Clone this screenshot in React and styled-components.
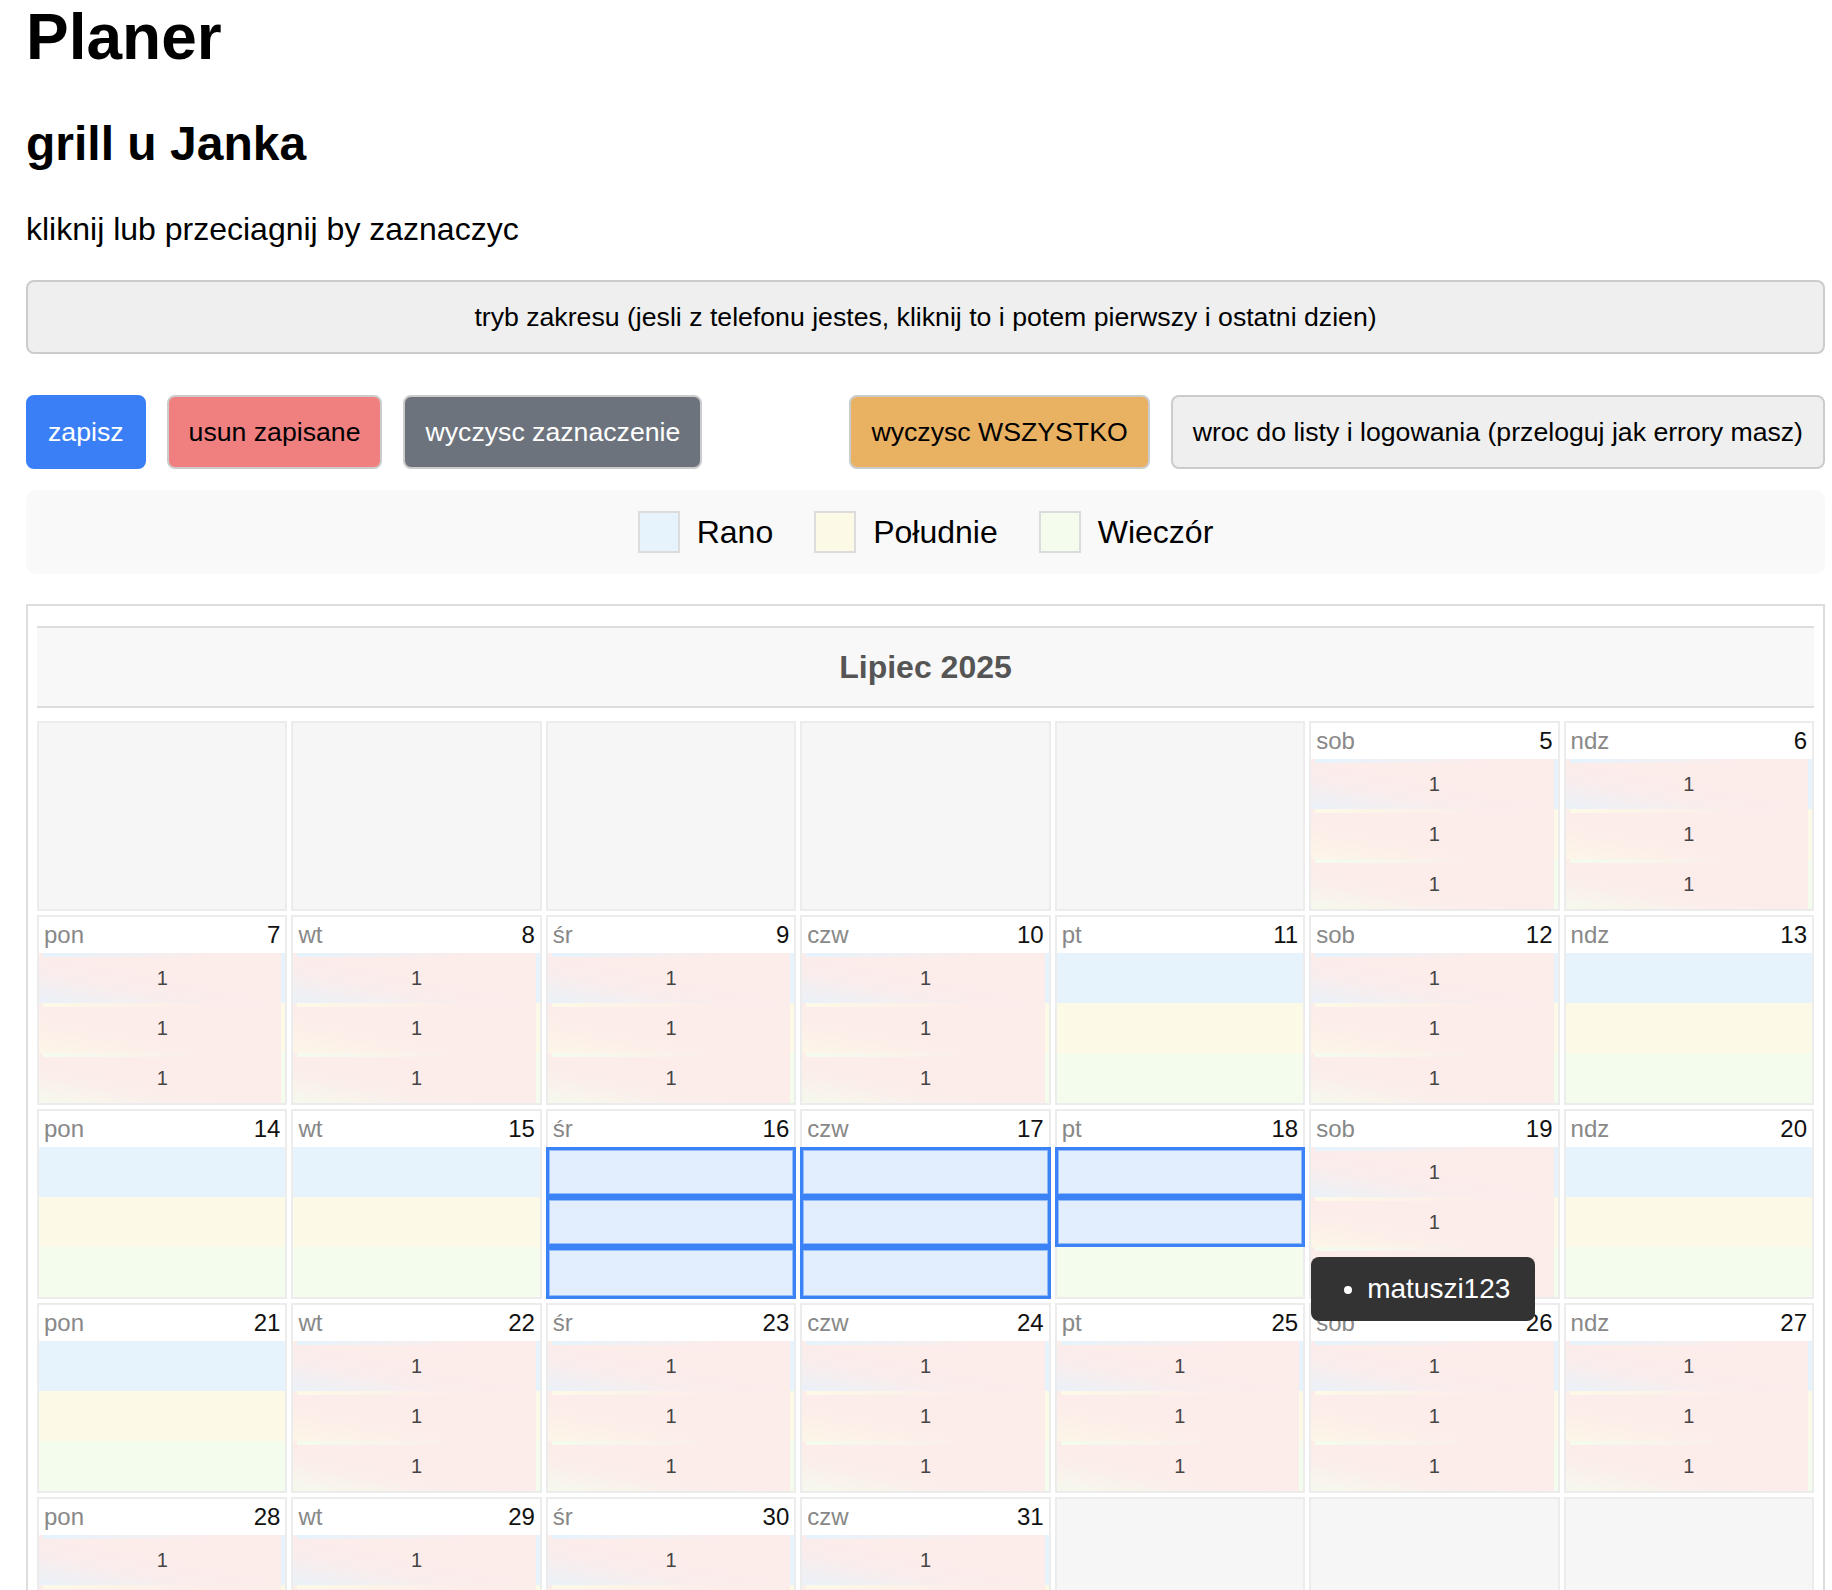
import React from "react";
import styled, { createGlobalStyle, css } from "styled-components";

const GlobalStyle = createGlobalStyle`
  *, *::before, *::after {
    box-sizing: border-box;
  }
  html, body {
    margin: 0;
    padding: 0;
    background: #fff;
  }
  body {
    font-family: "Liberation Sans", Arial, Helvetica, sans-serif;
    color: #000;
  }
`;

const SLOT_COLORS = ["#e6f3fc", "#fdf9e7", "#f4fcee"];
const SLOT_LABELS = ["Rano", "Południe", "Wieczór"];
const DAY_NAMES = ["pon", "wt", "śr", "czw", "pt", "sob", "ndz"];

const Page = styled.div`
  padding: 0 7px 40px 26px;
`;

const Title = styled.h1`
  margin: 0;
  font-size: 64px;
  line-height: 74px;
  font-weight: 700;
`;

const EventName = styled.h2`
  margin: 42px 0 0;
  font-size: 48px;
  line-height: 55px;
  font-weight: 700;
`;

const Hint = styled.p`
  margin: 40px 0 0;
  font-size: 32px;
  line-height: 37px;
`;

const Button = styled.button`
  font-family: inherit;
  font-size: 26.67px;
  line-height: 30px;
  padding: 20px;
  border: 2px solid ${({ $border }) => $border || "#ccc"};
  border-radius: 8px;
  background: ${({ $bg }) => $bg || "#efefef"};
  color: ${({ $color }) => $color || "#000"};
  white-space: nowrap;
  cursor: pointer;
`;

const RangeButton = styled(Button)`
  display: block;
  width: 100%;
  margin-top: 32px;
`;

const Actions = styled.div`
  margin-top: 41px;
  display: flex;
  justify-content: space-between;
`;

const ActionGroup = styled.div`
  display: flex;
  gap: 21px;
`;

const Legend = styled.div`
  margin-top: 21px;
  padding: 21px;
  background: #f9f9f9;
  border-radius: 10px;
  display: flex;
  justify-content: center;
  gap: 41px;
`;

const LegendItem = styled.div`
  display: flex;
  align-items: center;
  gap: 17px;
  font-size: 32px;
  line-height: 37px;
`;

const Swatch = styled.span`
  width: 42px;
  height: 42px;
  border: 2px solid #dcdcdc;
  background: ${({ $color }) => $color};
`;

const Calendar = styled.div`
  margin-top: 30px;
  border: 2px solid #ddd;
  padding: 0 9px 9px;
`;

const MonthBar = styled.div`
  margin-top: 20px;
  height: 82px;
  border-top: 2px solid #ddd;
  border-bottom: 2px solid #ddd;
  background: #f8f8f8;
  display: flex;
  align-items: center;
  justify-content: center;
  font-size: 32px;
  font-weight: 700;
  color: #555;
`;

const Grid = styled.div`
  margin-top: 13px;
  display: grid;
  grid-template-columns: repeat(7, 1fr);
  gap: 4px;
`;

const Cell = styled.div`
  position: relative;
  min-height: 190px;
  border: 2px solid #ececec;
  background: ${({ $empty }) => ($empty ? "#f6f6f6" : "#fff")};
  display: flex;
  flex-direction: column;
`;

const DayHead = styled.div`
  height: 36px;
  padding: 0 5px;
  display: flex;
  align-items: center;
  justify-content: space-between;
  font-size: 24px;
`;

const DayName = styled.span`
  color: #888;
`;

const DayNum = styled.span`
  color: #111;
`;

const Slot = styled.div`
  position: relative;
  height: 50px;
  background: ${({ $base }) => $base};
  display: flex;
  align-items: center;
  justify-content: center;

  ${({ $selected }) =>
    $selected &&
    css`
      z-index: 1;
      margin: 0 -2px;
      background: #e2eefd;
      border: 3px solid #3b82f6;
      box-shadow: inset 0 0 0 1px #94bbf9;
    `}

  ${({ $selected, $last }) =>
    $selected &&
    $last &&
    css`
      height: 52px;
      margin-bottom: -2px;
    `}
`;

const Heat = styled.div`
  position: absolute;
  top: 0;
  left: 0;
  right: 4px;
  bottom: 0;
  background: linear-gradient(
    to top right,
    rgba(252, 236, 234, 0.2) 0%,
    rgba(252, 236, 234, 0.85) 30%,
    #fcecea 50%
  );
`;

const HeatEdge = styled.div`
  position: absolute;
  top: 0;
  left: 4px;
  width: 70%;
  height: 4px;
  background: linear-gradient(to right, ${({ $base }) => $base}, rgba(252, 236, 234, 0));
`;

const Count = styled.span`
  position: relative;
  font-size: 20px;
  color: #444;
`;

const Tooltip = styled.div`
  position: absolute;
  left: 0;
  top: 146px;
  z-index: 5;
  padding: 16px 25px 16px 16px;
  background: #333;
  color: #fff;
  border-radius: 8px;
  font-size: 28px;
  line-height: 32px;
  white-space: nowrap;
`;

const TooltipList = styled.ul`
  margin: 0;
  padding-left: 40px;
`;

const FULL = [5, 6, 7, 8, 9, 10, 12, 19, 22, 23, 24, 25, 26, 27, 28, 29, 30, 31];
const SELECTED = { 16: [0, 1, 2], 17: [0, 1, 2], 18: [0, 1] };

const buildCells = () => {
  const cells = [];
  for (let i = 0; i < 5; i++) cells.push({ empty: true });
  for (let d = 5; d <= 31; d++) {
    cells.push({
      day: d,
      name: DAY_NAMES[(d - 7 + 700) % 7],
      counts: FULL.includes(d) ? [1, 1, 1] : [0, 0, 0],
      selected: SELECTED[d] || [],
      tooltip: d === 19 ? ["matuszi123"] : null,
    });
  }
  for (let i = 0; i < 3; i++) cells.push({ empty: true });
  return cells;
};

const DayCell = ({ cell }) => {
  if (cell.empty) return <Cell $empty />;
  return (
    <Cell>
      <DayHead>
        <DayName>{cell.name}</DayName>
        <DayNum>{cell.day}</DayNum>
      </DayHead>
      {SLOT_COLORS.map((base, i) => {
        const selected = cell.selected.includes(i);
        const count = cell.counts[i];
        return (
          <Slot key={i} $base={base} $selected={selected} $last={i === 2}>
            {!selected && count > 0 && (
              <>
                <Heat />
                <HeatEdge $base={base} />
                <Count>{count}</Count>
              </>
            )}
          </Slot>
        );
      })}
      {cell.tooltip && (
        <Tooltip>
          <TooltipList>
            {cell.tooltip.map((u) => (
              <li key={u}>{u}</li>
            ))}
          </TooltipList>
        </Tooltip>
      )}
    </Cell>
  );
};

const App = () => {
  const cells = buildCells();

  return (
    <Page>
      <GlobalStyle />
      <Title>Planer</Title>
      <EventName>grill u Janka</EventName>
      <Hint>kliknij lub przeciagnij by zaznaczyc</Hint>

      <RangeButton>
        tryb zakresu (jesli z telefonu jestes, kliknij to i potem pierwszy i ostatni dzien)
      </RangeButton>

      <Actions>
        <ActionGroup>
          <Button $bg="#3b7ff6" $border="#3b7ff6" $color="#fff">
            zapisz
          </Button>
          <Button $bg="#f08080">usun zapisane</Button>
          <Button $bg="#6c737c" $color="#fff">
            wyczysc zaznaczenie
          </Button>
        </ActionGroup>
        <ActionGroup>
          <Button $bg="#e9b162">wyczysc WSZYSTKO</Button>
          <Button>wroc do listy i logowania (przeloguj jak errory masz)</Button>
        </ActionGroup>
      </Actions>

      <Legend>
        {SLOT_LABELS.map((label, i) => (
          <LegendItem key={label}>
            <Swatch $color={SLOT_COLORS[i]} />
            {label}
          </LegendItem>
        ))}
      </Legend>

      <Calendar>
        <MonthBar>Lipiec 2025</MonthBar>
        <Grid>
          {cells.map((cell, i) => (
            <DayCell key={i} cell={cell} />
          ))}
        </Grid>
      </Calendar>
    </Page>
  );
};

export default App;
